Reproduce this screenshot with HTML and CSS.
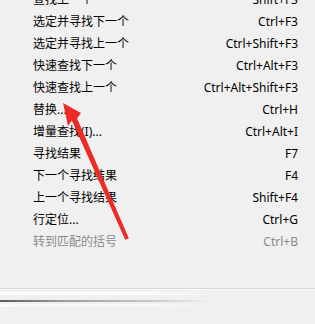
FILE: index.html
```html
<!DOCTYPE html>
<html lang="zh-CN">
<head>
  <meta charset="UTF-8">
  <title>搜索菜单</title>
  <link rel="stylesheet" href="styles.css">
</head>
<body>
  <div class="menu">
    <ul class="items">
      <li><span>查找上一个</span><span class="key">Shift+F3</span></li>
      <li><span>选定并寻找下一个</span><span class="key">Ctrl+F3</span></li>
      <li><span>选定并寻找上一个</span><span class="key">Ctrl+Shift+F3</span></li>
      <li><span>快速查找下一个</span><span class="key">Ctrl+Alt+F3</span></li>
      <li><span>快速查找上一个</span><span class="key">Ctrl+Alt+Shift+F3</span></li>
      <li><span>替换...</span><span class="key">Ctrl+H</span></li>
      <li><span>增量查找(I)...</span><span class="key">Ctrl+Alt+I</span></li>
      <li><span>寻找结果</span><span class="key">F7</span></li>
      <li><span>下一个寻找结果</span><span class="key">F4</span></li>
      <li><span>上一个寻找结果</span><span class="key">Shift+F4</span></li>
      <li><span>行定位...</span><span class="key">Ctrl+G</span></li>
      <li class="disabled"><span>转到匹配的括号</span><span class="key">Ctrl+B</span></li>
    </ul>

    <!-- red annotation arrow pointing at 替换... -->
    <svg class="arrow" width="315" height="324" viewBox="0 0 315 324">
      <polygon fill="#ec2b25" points="63,114 81,124 77.1,129.4 128.8,249.2 125.2,250.8 71.9,131.6 68,137"/>
    </svg>
  </div>

  <div class="bottom">
    <div class="streak light"></div>
    <div class="streak dark"></div>
    <div class="streak light2"></div>
  </div>
</body>
</html>
```

FILE: styles.css
```css
html, body { margin: 0; padding: 0; }
body { width: 315px; height: 324px; overflow: hidden; background: #f0f0f0; font-family: "Noto Sans", "Noto Sans CJK SC", sans-serif; font-size: 12px; color: #000; }
.menu { position: relative; height: 299px; }
.items { list-style: none; margin: -11px 0 0; padding: 0 17px 0 33px; }
.items li { display: flex; justify-content: space-between; align-items: center; height: 22px; line-height: 22px; white-space: nowrap; }
.items li.disabled { color: #8a8a8a; }
.key { text-align: right; }
.arrow { position: absolute; left: 0; top: 0; pointer-events: none; }
.bottom { border-top: 1px solid #d6d6d6; box-shadow: inset 0 1px 0 #fafafa; height: 24px; padding-top: 3px; }
.streak { height: 3px; }
.streak.light { background: linear-gradient(to right, #fdfdfd 0, #fbfbfb 150px, #f0f0f0 215px); }
.streak.dark { margin-top: 5px; height: 2px; background: linear-gradient(to right, #5a5a5a 0, #9a9a9a 60px, #c8c8c8 150px, #f0f0f0 210px); }
.streak.light2 { margin-top: 2px; background: linear-gradient(to right, #fafafa 0, #f7f7f7 150px, #f0f0f0 210px); }
```
